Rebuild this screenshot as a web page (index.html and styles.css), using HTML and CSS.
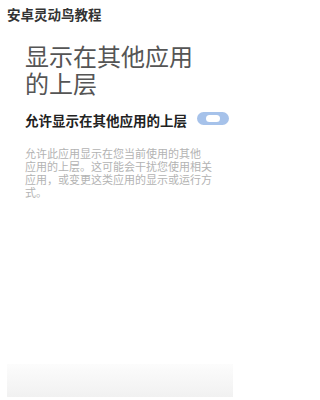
FILE: index.html
```html
<!DOCTYPE html>
<html lang="zh-CN">
<head>
<meta charset="utf-8">
<title>显示在其他应用的上层</title>
<link rel="stylesheet" href="styles.css">
</head>
<body>
<div class="page">
  <header class="topbar">安卓灵动鸟教程</header>
  <h1 class="title"><span class="title-line">显示在其他应用</span><span class="title-line">的上层</span></h1>
  <div class="setting-row">
    <span class="setting-label">允许显示在其他应用的上层</span>
    <span class="toggle"><span class="knob"></span></span>
  </div>
  <p class="desc"><span class="desc-line">允许此应用显示在您当前使用的其他</span><span class="desc-line">应用的上层。这可能会干扰您使用相关</span><span class="desc-line">应用，或变更这类应用的显示或运行方</span><span class="desc-line">式。</span></p>
  <div class="bottom-bar"></div>
</div>
</body>
</html>
```

FILE: styles.css
```css
html, body {
  margin: 0;
  padding: 0;
  background: #ffffff;
}
.page {
  display: flex;
  flex-direction: column;
  width: 235px;
  height: 400px;
  overflow: hidden;
  font-family: "Noto Sans CJK SC", "Noto Sans", sans-serif;
}
.topbar {
  padding: 6px 0 0 7px;
  font-size: 13.5px;
  line-height: 17px;
  font-weight: 700;
  color: #333333;
}
.title {
  display: flex;
  flex-direction: column;
  margin: 19px 0 0 25px;
  font-size: 24px;
  line-height: 27px;
  font-weight: 400;
  color: #555555;
}
.title-line {
  display: block;
  white-space: nowrap;
}
.setting-row {
  display: flex;
  align-items: center;
  justify-content: space-between;
  margin-top: 14px;
  padding: 0 6px 0 25px;
  height: 20px;
}
.setting-label {
  font-size: 13.5px;
  line-height: 20px;
  font-weight: 700;
  color: #222222;
  white-space: nowrap;
}
.toggle {
  display: flex;
  align-items: center;
  justify-content: flex-end;
  width: 32px;
  height: 13px;
  box-sizing: border-box;
  padding-right: 9px;
  border-radius: 7px;
  background: #a6c2ea;
  margin-bottom: 4px;
}
.knob {
  width: 14px;
  height: 7px;
  border-radius: 4px;
  background: #ffffff;
}
.desc {
  display: flex;
  flex-direction: column;
  margin: 17px 0 0 25px;
  font-size: 11px;
  line-height: 13px;
  color: #b3b3b3;
}
.desc-line {
  display: block;
  white-space: nowrap;
}
.bottom-bar {
  margin: auto 2px 3px 7px;
  height: 33px;
  background: linear-gradient(to bottom, #fcfcfc 0%, #f1f1f1 100%);
}
```
